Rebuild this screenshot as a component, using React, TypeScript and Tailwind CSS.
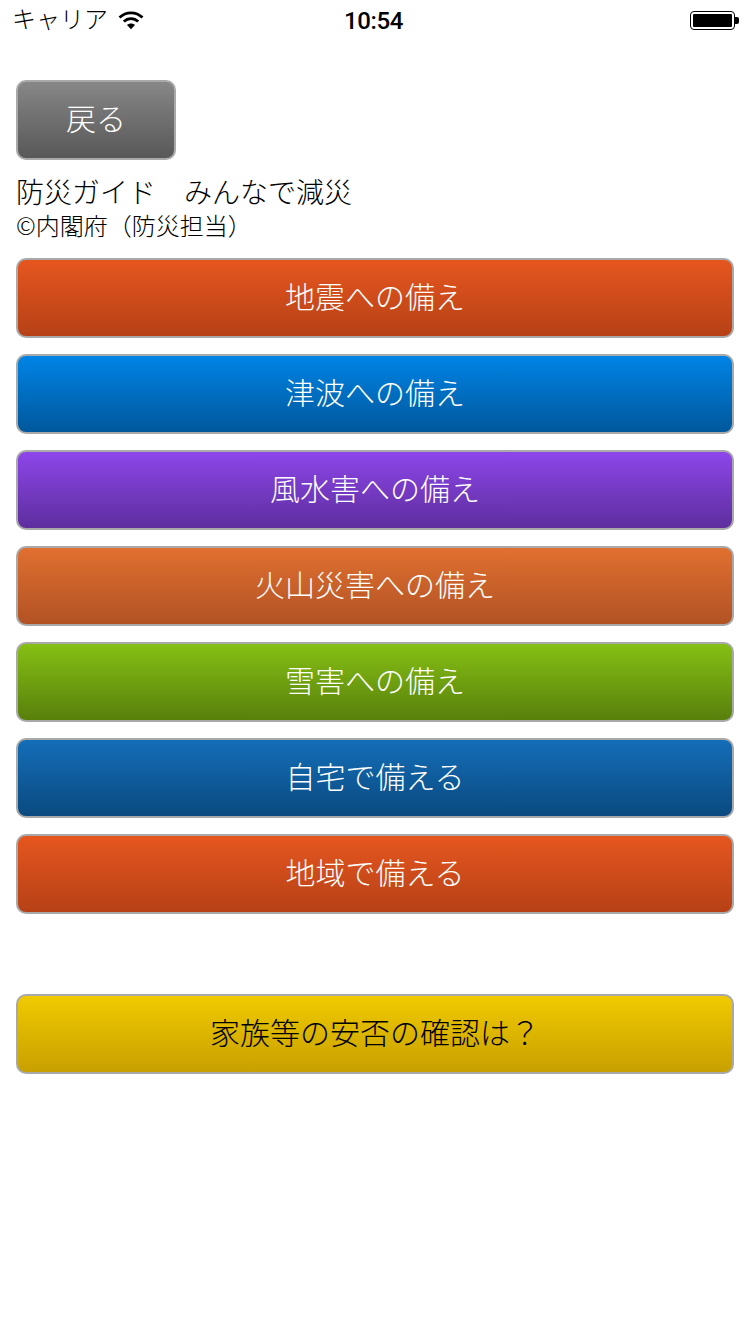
import React from 'react';

const FONT = "font-['Noto_Sans_CJK_JP','Liberation_Sans',sans-serif]";

const guideButtons = [
  { label: '地震への備え', color: 'from-[#e6561f] to-[#b64116]' },
  { label: '津波への備え', color: 'from-[#0084e6] to-[#00589c]' },
  { label: '風水害への備え', color: 'from-[#8d46ea] to-[#5e2e9e]' },
  { label: '火山災害への備え', color: 'from-[#e07030] to-[#b25224]' },
  { label: '雪害への備え', color: 'from-[#86c014] to-[#58800c]' },
  { label: '自宅で備える', color: 'from-[#146eb8] to-[#0a4a80]' },
  { label: '地域で備える', color: 'from-[#e6561f] to-[#b64116]' },
];

const WifiIcon = () => (
  <svg width="26" height="20" viewBox="0 0 26 20" fill="none" className="block">
    <path d="M1.5 7.5 C8 1.2 18 1.2 24.5 7.5" stroke="#000" strokeWidth="2.8" />
    <path d="M5.8 11.6 C10 7.6 16 7.6 20.2 11.6" stroke="#000" strokeWidth="2.8" />
    <path d="M9 15 C11.4 13 14.6 13 17 15 L13 19.2 Z" fill="#000" />
  </svg>
);

const Battery = () => (
  <div className="flex items-center">
    <div className="w-[45px] h-[19px] rounded-[4px] border border-black p-[2px]">
      <div className="w-full h-full bg-black rounded-[1px]" />
    </div>
    <div className="w-[4px] h-[7px] bg-black rounded-r-[2px]" />
  </div>
);

const StatusBar = () => (
  <div className="relative h-10 flex items-center justify-between pl-3 pr-[11px] text-black">
    <div className="flex items-center gap-[10px]">
      <span className="text-[24px] leading-none font-light -translate-y-[2px]">キャリア</span>
      <WifiIcon />
    </div>
    <span className="absolute left-[344px] top-[6px] text-[24px] leading-[30px] font-['Roboto'] font-medium tracking-[-0.4px]">
      10:54
    </span>
    <Battery />
  </div>
);

const GuideButton = ({ label, color, dark }: { label: string; color: string; dark?: boolean }) => (
  <button
    className={`w-full h-20 pb-[6px] rounded-[10px] border-2 border-[#a9a9a9] bg-gradient-to-b ${color} text-[30px] leading-none font-light ${
      dark ? 'text-black' : 'text-white'
    }`}
  >
    {label}
  </button>
);

const App: React.FC = () => {
  return (
    <div className={`w-[750px] h-[1334px] bg-white overflow-hidden ${FONT}`}>
      <StatusBar />
      <div className="px-4 pt-10">
        <button className="block w-40 h-20 pb-[6px] rounded-[10px] border-2 border-[#a9a9a9] bg-gradient-to-b from-[#878787] to-[#585858] text-white text-[30px] leading-none font-light">
          戻る
        </button>
        <div className="mt-[14px] text-black text-[28px] leading-[34px] font-light whitespace-pre">防災ガイド　みんなで減災</div>
        <div className="mt-[3px] text-black text-[24px] leading-[28px] font-light">©内閣府（防災担当）</div>
        <div className="mt-[19px] flex flex-col gap-4">
          {guideButtons.map((b) => (
            <GuideButton key={b.label} label={b.label} color={b.color} />
          ))}
        </div>
        <div className="mt-20">
          <GuideButton label="家族等の安否の確認は？" color="from-[#f0ca00] to-[#c8a000]" dark />
        </div>
      </div>
    </div>
  );
};

export default App;
